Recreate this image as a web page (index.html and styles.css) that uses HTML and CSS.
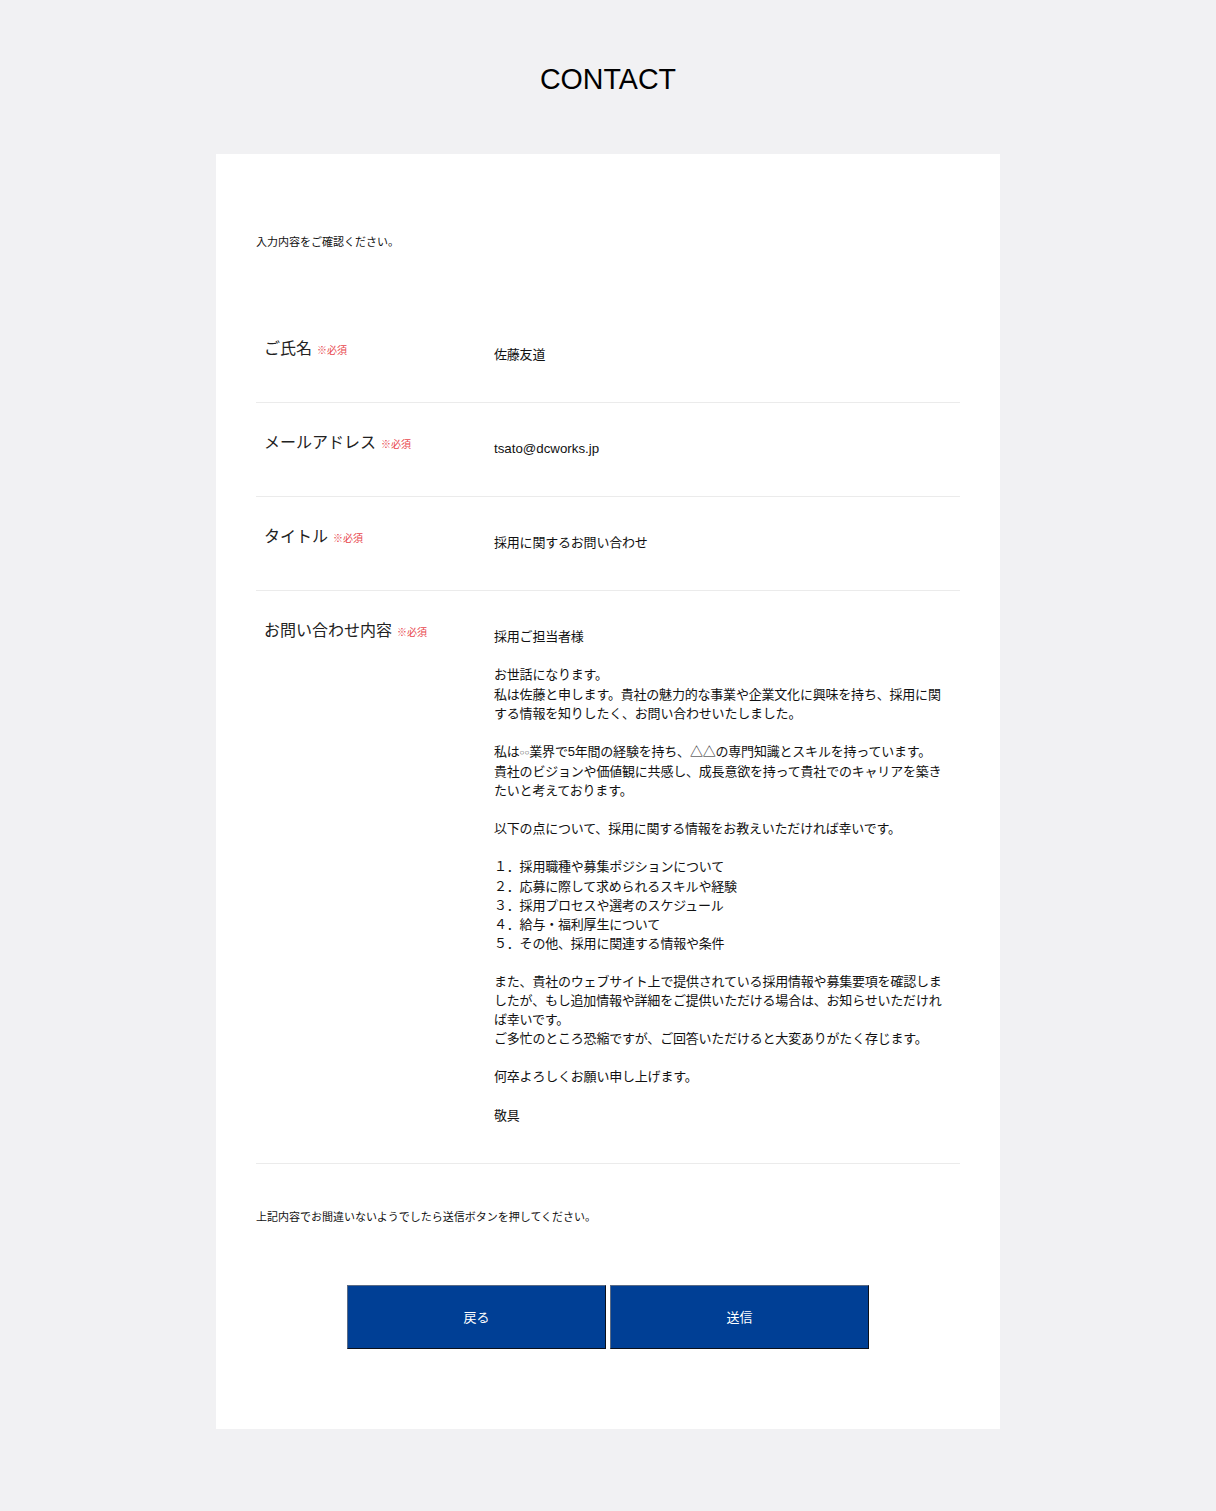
FILE: index.html
```html
<!DOCTYPE html>
<html lang="ja">
<head>
<meta charset="utf-8">
<title>CONTACT</title>
<link rel="stylesheet" href="styles.css">
</head>
<body>
<header class="page-header">
  <h1 class="page-title">CONTACT</h1>
</header>
<main class="card">
  <p class="note note-top">入力内容をご確認ください。</p>
  <div class="rows">
    <div class="row">
      <div class="label">ご氏名<span class="req">※必須</span></div>
      <div class="value">佐藤友道</div>
    </div>
    <div class="row">
      <div class="label">メールアドレス<span class="req">※必須</span></div>
      <div class="value"><span class="latin">tsato@dcworks.jp</span></div>
    </div>
    <div class="row">
      <div class="label">タイトル<span class="req">※必須</span></div>
      <div class="value">採用に関するお問い合わせ</div>
    </div>
    <div class="row">
      <div class="label">お問い合わせ内容<span class="req">※必須</span></div>
      <div class="value">採用ご担当者様<br><br>お世話になります。<br>私は佐藤と申します。貴社の魅力的な事業や企業文化に興味を持ち、採用に関する情報を知りしたく、お問い合わせいたしました。<br><br>私は<span class="dots">○○</span>業界で5年間の経験を持ち、△△の専門知識とスキルを持っています。<br>貴社のビジョンや価値観に共感し、成長意欲を持って貴社でのキャリアを築きたいと考えております。<br><br>以下の点について、採用に関する情報をお教えいただければ幸いです。<br><br>１．採用職種や募集ポジションについて<br>２．応募に際して求められるスキルや経験<br>３．採用プロセスや選考のスケジュール<br>４．給与・福利厚生について<br>５．その他、採用に関連する情報や条件<br><br>また、貴社のウェブサイト上で提供されている採用情報や募集要項を確認しましたが、もし追加情報や詳細をご提供いただける場合は、お知らせいただければ幸いです。<br>ご多忙のところ恐縮ですが、ご回答いただけると大変ありがたく存じます。<br><br>何卒よろしくお願い申し上げます。<br><br>敬具</div>
    </div>
  </div>
  <p class="note note-bottom">上記内容でお間違いないようでしたら送信ボタンを押してください。</p>
  <div class="actions">
    <button class="btn" type="button">戻る</button>
    <button class="btn" type="button">送信</button>
  </div>
</main>
<div class="page-footer"></div>
</body>
</html>
```

FILE: styles.css
```css
html, body {
  margin: 0;
  padding: 0;
}
body {
  background: #f1f1f3;
  font-family: "Liberation Sans", "Noto Sans CJK JP", sans-serif;
  color: #111;
}
.page-header {
  padding: 62px 0 58px;
  text-align: center;
}
.page-title {
  margin: 0;
  font-size: 28.6px;
  font-weight: normal;
  line-height: 34px;
  color: #000;
}
.card {
  width: 784px;
  margin: 0 auto;
  background: #fff;
  box-sizing: border-box;
  padding: 80px 40px 80px;
}
.note {
  margin: 0;
  font-size: 11px;
  line-height: 16px;
  color: #111;
}
.note-top {
  margin-bottom: 59px;
}
.rows {
  display: flex;
  flex-direction: column;
}
.row {
  display: flex;
  align-items: flex-start;
  padding: 30px 0 38px;
  border-bottom: 1px solid #ebebeb;
}
.label {
  width: 230px;
  flex: none;
  padding-left: 8px;
  font-size: 16px;
  line-height: 20px;
  color: #222;
}
.req {
  margin-left: 5px;
  font-size: 10px;
  color: #e8474d;
}
.value {
  flex: 1;
  padding: 6px 8px 0 0;
  font-size: 13px;
  line-height: 19.1px;
  letter-spacing: -0.2px;
  color: #111;
}
.latin {
  letter-spacing: 0;
  font-size: 13.3px;
}
.dots {
  font-size: 8px;
  letter-spacing: 0;
  vertical-align: 1px;
  color: #444;
}
.note-bottom {
  margin-top: 45px;
}
.actions {
  display: flex;
  justify-content: center;
  gap: 4px;
  margin-top: 60px;
}
.btn {
  width: 259px;
  height: 64px;
  box-sizing: border-box;
  background: #003f95;
  color: #fff;
  font-family: "Liberation Sans", "Noto Sans CJK JP", sans-serif;
  font-size: 13px;
  border: 1px solid;
  border-color: #5a6b85 #0a0f1a #0a0f1a #5a6b85;
  padding: 0;
  cursor: pointer;
}
.page-footer {
  height: 82px;
}
```
